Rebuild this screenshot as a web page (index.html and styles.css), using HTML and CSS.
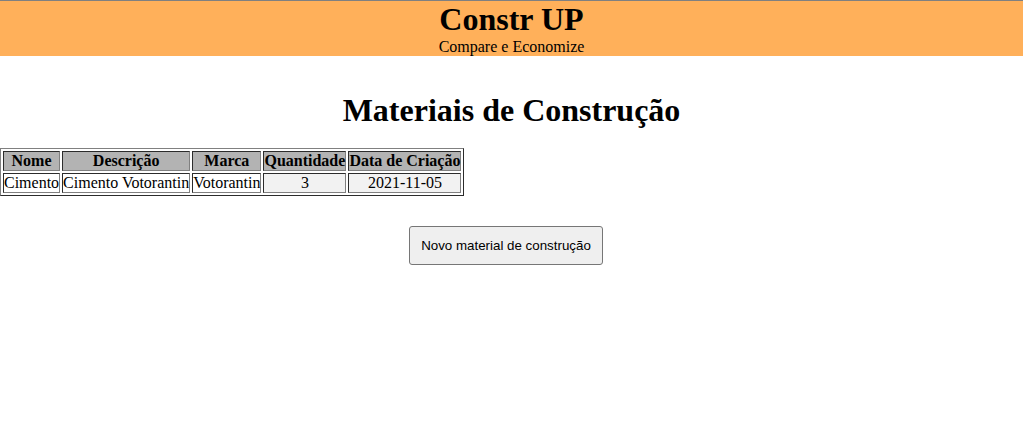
FILE: index.html
```html
<!DOCTYPE html>
<html lang="pt-BR">
<head>
<meta charset="utf-8">
<title>Constr UP</title>
<link rel="stylesheet" href="styles.css">
</head>
<body>
<header class="site-header">
  <h1 class="brand">Constr UP</h1>
  <p class="tagline">Compare e Economize</p>
</header>
<main class="content">
  <h2 class="page-title">Materiais de Construção</h2>
  <table class="materials">
    <thead>
      <tr>
        <th>Nome</th>
        <th>Descrição</th>
        <th>Marca</th>
        <th>Quantidade</th>
        <th>Data de Criação</th>
      </tr>
    </thead>
    <tbody>
      <tr>
        <td>Cimento</td>
        <td>Cimento Votorantin</td>
        <td>Votorantin</td>
        <td class="num">3</td>
        <td class="num">2021-11-05</td>
      </tr>
    </tbody>
  </table>
  <div class="actions">
    <button class="btn" type="button">Novo material de construção</button>
  </div>
</main>
</body>
</html>
```
FILE: styles.css
```css
html, body {
  margin: 0;
  padding: 0;
  background: #ffffff;
  font-family: "Liberation Serif", "Times New Roman", serif;
  color: #000;
}

.site-header {
  background: #ffb05a;
  border-top: 1px solid #808080;
  text-align: center;
  height: 55px;
}

.brand {
  margin: 0;
  font-size: 32px;
  font-weight: bold;
  line-height: 37px;
}

.tagline {
  margin: 0;
  font-size: 16px;
  line-height: 18px;
}

.page-title {
  margin: 36px 0 19px;
  font-size: 32px;
  font-weight: bold;
  line-height: 37px;
  text-align: center;
}

.materials {
  border: 1px outset #808080;
  border-spacing: 2px;
  font-size: 16px;
}

.materials th,
.materials td {
  border: 1px inset #808080;
  padding: 0;
  line-height: 18px;
}

.materials th {
  background: #b3b3b3;
}

.materials td.num {
  background: #f2f2f2;
  text-align: center;
}

.actions {
  display: flex;
  justify-content: center;
  margin-top: 30px;
  padding-right: 11px;
}

.btn {
  font-family: "Liberation Sans", Arial, sans-serif;
  font-size: 13.33px;
  padding: 11px 11px;
  background: #efefef;
  border: 1px solid #767676;
  border-radius: 3px;
  color: #000;
}
```
